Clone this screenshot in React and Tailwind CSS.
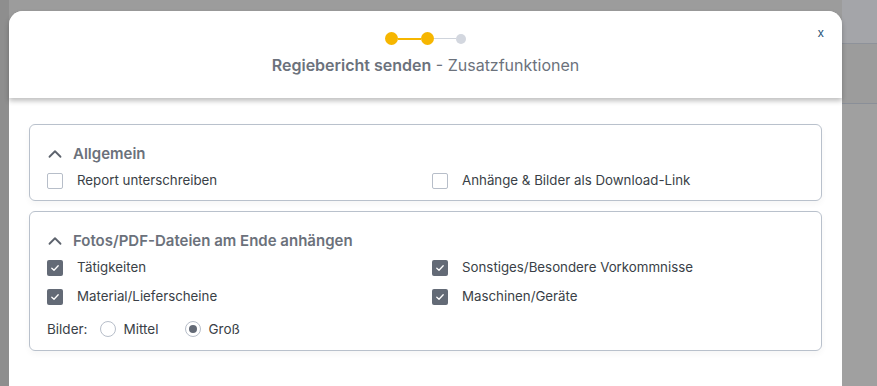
import { ChevronUp } from 'lucide-react'

const FONT = { fontFamily: 'Inter, "Noto Sans", sans-serif' }

function Box({ checked }) {
  return checked ? (
    <span className="w-4 h-4 rounded-[2px] bg-[#636a76] flex items-center justify-center shrink-0">
      <svg width="10" height="10" viewBox="0 0 10 10" fill="none">
        <path d="M1.8 5.2 L4 7.3 L8.2 2.8" stroke="white" strokeWidth="1.3" strokeLinecap="round" strokeLinejoin="round" />
      </svg>
    </span>
  ) : (
    <span className="w-4 h-4 rounded-[2px] border border-[#b7bec9] bg-white shrink-0" />
  )
}

function Check({ checked, label }) {
  return (
    <div className="flex items-center gap-[14px] h-[18px]">
      <Box checked={checked} />
      <span className="text-[13.3px] text-[#3a3f47]">{label}</span>
    </div>
  )
}

function Radio({ checked, label }) {
  return (
    <div className="flex items-center gap-[7px]">
      <span className="w-4 h-4 rounded-full border border-[#b7bec9] bg-white flex items-center justify-center">
        {checked && <span className="w-2 h-2 rounded-full bg-[#636a76]" />}
      </span>
      <span className="text-[13.5px] text-[#3a3f47]">{label}</span>
    </div>
  )
}

function Section({ title, children }) {
  return (
    <div className="border border-[#b9c1cc] rounded-[6px] pl-[17px] pr-[10px] pt-[19px] shadow-[0_3px_6px_rgba(0,0,0,0.04)]">
      <div className="flex items-center gap-[7px] text-[#6b717b] h-[20px]">
        <ChevronUp size={22} strokeWidth={2} className="text-[#5d636d] -ml-[3px]" />
        <span className="text-[15px] font-semibold">{title}</span>
      </div>
      {children}
    </div>
  )
}

export default function App() {
  return (
    <div className="w-[877px] h-[386px] overflow-hidden bg-[#9c9c9c] flex" style={FONT}>
      <div className="w-[9px] bg-[#8e8e8e]" />
      <div className="relative w-[833px] mt-[11px] bg-white rounded-t-[14px] flex flex-col">
        <div className="relative h-[87px] flex flex-col items-center shadow-[0_3px_5px_rgba(0,0,0,0.25)] z-10 bg-white rounded-t-[14px]">
          <div className="flex items-center mt-[21px]">
            <span className="w-[13px] h-[13px] rounded-full bg-[#f6b600]" />
            <span className="w-[23px] h-[2px] bg-[#f6b600]" />
            <span className="w-[13px] h-[13px] rounded-full bg-[#f6b600]" />
            <span className="w-[22px] h-[1px] bg-[#cfd4dc]" />
            <span className="w-[10px] h-[10px] rounded-full bg-[#d3d7df]" />
          </div>
          <div className="mt-[8px] text-[16px] text-[#6c727c]">
            <span className="font-semibold">Regiebericht senden</span> - Zusatzfunktionen
          </div>
          <span className="absolute right-[18px] top-[13px] text-[12px] text-[#1f5479]">x</span>
        </div>
        <div className="px-[20px] pt-[26px] flex flex-col gap-[10px]">
          <Section title="Allgemein">
            <div className="grid grid-cols-[385px_1fr] mt-[8px] pb-[10px]">
              <Check label="Report unterschreiben" />
              <Check label="Anhänge & Bilder als Download-Link" />
            </div>
          </Section>
          <Section title="Fotos/PDF-Dateien am Ende anhängen">
            <div className="grid grid-cols-[385px_1fr] gap-y-[11px] mt-[8px]">
              <Check checked label="Tätigkeiten" />
              <Check checked label="Sonstiges/Besondere Vorkommnisse" />
              <Check checked label="Material/Lieferscheine" />
              <Check checked label="Maschinen/Geräte" />
            </div>
            <div className="flex items-center mt-[13px] pb-[11px]">
              <span className="text-[13.5px] text-[#3a3f47] mr-[13px]">Bilder:</span>
              <Radio label="Mittel" />
              <span className="w-[27px]" />
              <Radio checked label="Groß" />
            </div>
          </Section>
        </div>
      </div>
      <div className="flex-1 flex flex-col">
        <div className="h-[44px] bg-[#a4a5a9] border-b border-[#8e929a]" />
        <div className="h-[60px] bg-[#9c9c9c] border-b border-[#8a8f98]" />
        <div className="flex-1 bg-[#a0a0a0]" />
      </div>
    </div>
  )
}
